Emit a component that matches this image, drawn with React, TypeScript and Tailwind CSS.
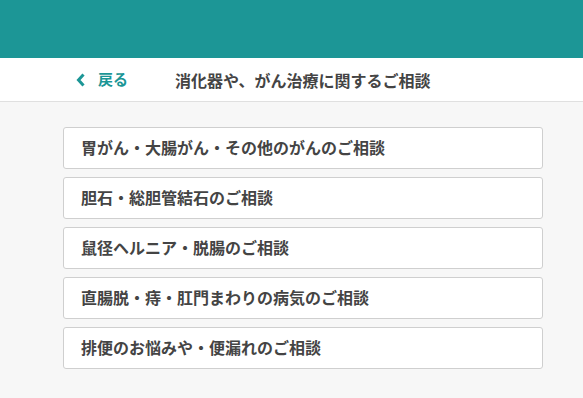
import React from "react";

const items = [
  "胃がん・大腸がん・その他のがんのご相談",
  "胆石・総胆管結石のご相談",
  "鼠径ヘルニア・脱腸のご相談",
  "直腸脱・痔・肛門まわりの病気のご相談",
  "排便のお悩みや・便漏れのご相談",
];

export default function App() {
  return (
    <div className="min-h-[398px] bg-[#f7f7f7] font-['Noto_Sans_CJK_JP',sans-serif]">
      <div className="h-[58px] bg-[#1c9696]" />
      <div className="h-[44px] bg-white border-b border-[#e0e0e0] flex items-center">
        <a href="#" className="ml-[76px] flex items-center gap-[12px] text-[#1c9696] text-[15px] font-bold">
          <svg width="10" height="14" viewBox="0 0 10 14" fill="none">
            <path d="M7.5 1.5L2.5 7L7.5 12.5" stroke="#1c9696" strokeWidth="3" />
          </svg>
          戻る
        </a>
        <h1 className="ml-[47px] text-[16px] font-bold text-[#444]">消化器や、がん治療に関するご相談</h1>
      </div>
      <div className="pt-[25px] pl-[63px] flex flex-col gap-[8px]">
        {items.map((t) => (
          <button
            key={t}
            className="w-[480px] h-[42px] bg-white border border-[#cfcfcf] rounded-[3px] text-left pl-[17px] pb-[3px] text-[16px] font-bold text-[#444]"
          >
            {t}
          </button>
        ))}
      </div>
    </div>
  );
}
